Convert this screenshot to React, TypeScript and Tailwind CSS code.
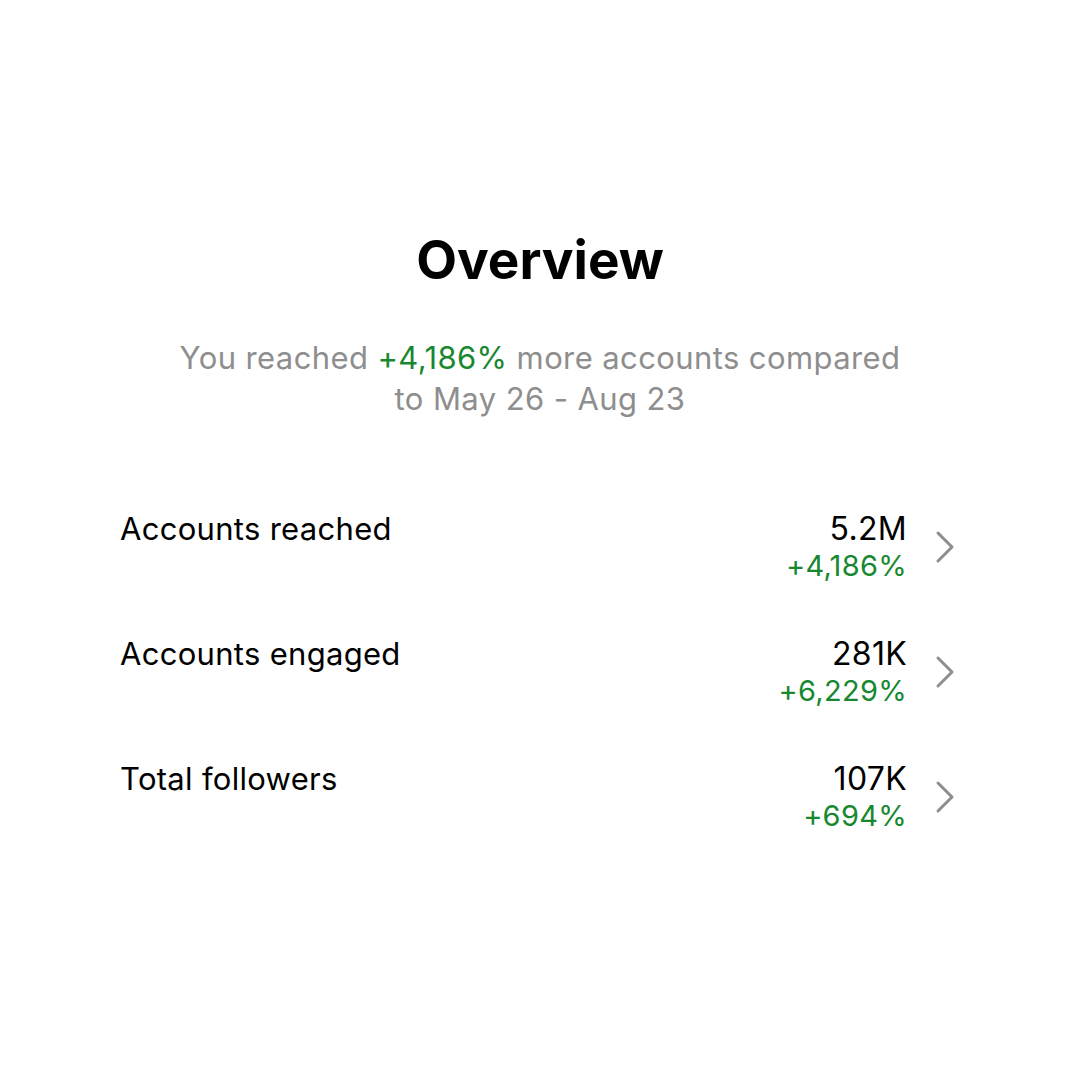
const rows = [
  { label: 'Accounts reached', value: '5.2M', change: '+4,186%' },
  { label: 'Accounts engaged', value: '281K', change: '+6,229%' },
  { label: 'Total followers', value: '107K', change: '+694%' },
];

const Chevron = () => (
  <svg width="22" height="34" viewBox="0 0 22 34" fill="none" className="shrink-0">
    <path d="M4 3 L18 17 L4 31" stroke="#8e8e8e" strokeWidth="3" strokeLinecap="round" strokeLinejoin="round" />
  </svg>
);

export default function App() {
  return (
    <div
      className="flex h-[1080px] w-[1080px] flex-col items-center bg-white"
      style={{ fontFamily: 'Inter, "Liberation Sans", Arial, sans-serif' }}
    >
      <h1 className="mt-[228px] text-[53px] font-bold leading-[64px] text-black">Overview</h1>
      <p className="mt-[45px] text-center text-[31px] leading-[41px] tracking-[0.4px] text-[#8e8e8e]">
        You reached <span className="text-[#17882f]">+4,186%</span> more accounts compared
        <br />
        to May 26 - Aug 23
      </p>
      <div className="mt-[91px] flex w-[840px] flex-col gap-[52px]">
        {rows.map((row) => (
          <div key={row.label} className="flex items-start justify-between">
            <span className="text-[31px] leading-[38px] tracking-[0.3px] text-black">{row.label}</span>
            <div className="flex items-center gap-[27px] pr-[4px]">
              <div className="flex flex-col items-end">
                <span className="text-[32px] leading-[38px] tracking-[0.3px] text-black">{row.value}</span>
                <span className="text-[29px] leading-[35px] tracking-[0.3px] text-[#17882f]">{row.change}</span>
              </div>
              <Chevron />
            </div>
          </div>
        ))}
      </div>
    </div>
  );
}
